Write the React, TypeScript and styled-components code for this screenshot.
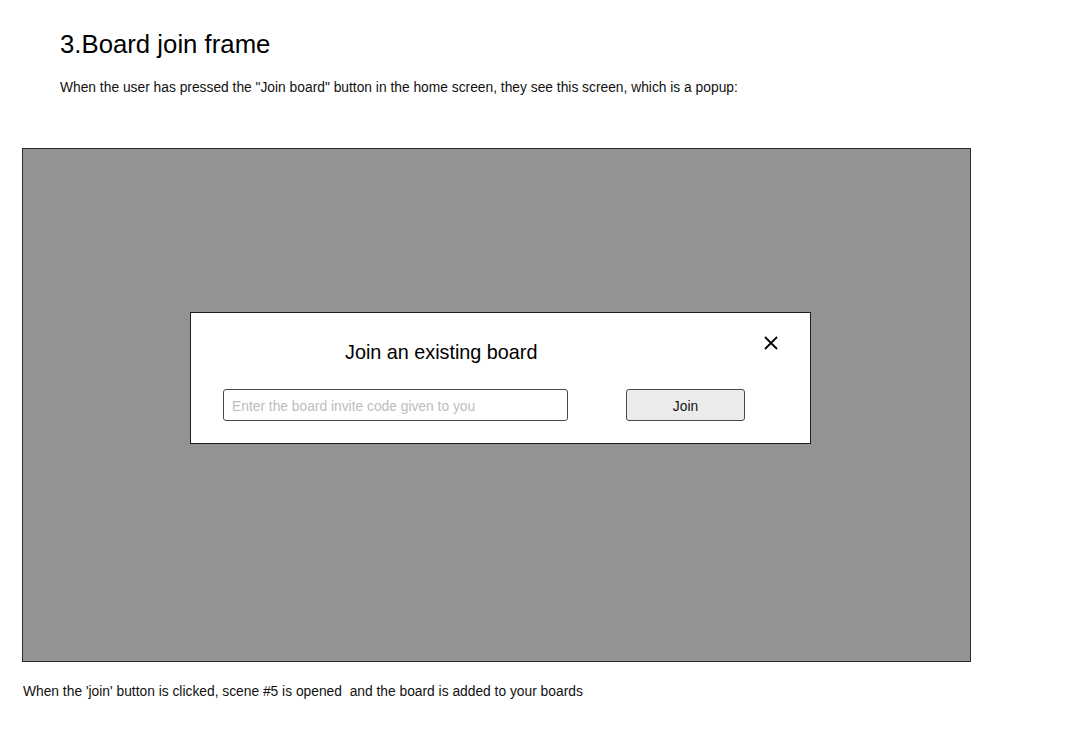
import React from "react";
import styled, { createGlobalStyle } from "styled-components";

const Global = createGlobalStyle`
  html, body { margin: 0; padding: 0; background: #ffffff; }
  body { font-family: "Liberation Sans", Arial, sans-serif; color: #000; }
`;

const Page = styled.div`
  padding-top: 29px;
  width: 1084px;
`;

const Title = styled.h1`
  margin: 0 0 0 60px;
  font-size: 25.75px;
  line-height: 30px;
  font-weight: 400;
`;

const Text = styled.p<{ $indent: number }>`
  margin: 0 0 0 ${(p) => p.$indent}px;
  font-size: 13.8px;
  line-height: 15px;
  color: #111;
`;

const Intro = styled(Text)`
  margin-top: 21px;
`;

const Footer = styled(Text)`
  margin-top: 22px;
`;

const Frame = styled.div`
  margin: 53px 0 0 22px;
  border: 1px solid #2b2b2b;
  background: #939393;
  padding: 163px 0 0 167px;
  box-sizing: content-box;
  display: flex;
  align-items: flex-start;
  width: 780px;
  height: 349px;
`;

const Modal = styled.div`
  width: 619px;
  height: 130px;
  background: #fff;
  border: 1px solid #1e1e1e;
  display: flex;
  flex-direction: column;
`;

const Header = styled.div`
  display: flex;
  align-items: flex-start;
  padding: 28px 31px 0 154px;
`;

const ModalTitle = styled.div`
  font-size: 19.8px;
  line-height: 23px;
  flex: 1;
`;

const Close = styled.button`
  width: 16px;
  height: 16px;
  margin-top: -6px;
  padding: 0;
  border: none;
  background: none;
  display: flex;
  align-items: center;
  justify-content: center;
  cursor: pointer;
`;

const Row = styled.div`
  display: flex;
  align-items: center;
  padding: 25px 0 0 32px;
  gap: 58px;
`;

const Input = styled.input`
  width: 345px;
  height: 32px;
  box-sizing: border-box;
  border: 1px solid #4a4a4a;
  border-radius: 3px;
  padding: 2px 8px 0;
  font-family: "Liberation Sans", Arial, sans-serif;
  font-size: 13.8px;
  outline: none;
  &::placeholder { color: #bdbdbd; }
`;

const JoinButton = styled.button`
  width: 119px;
  height: 32px;
  box-sizing: border-box;
  border: 1px solid #4a4a4a;
  border-radius: 3px;
  background: #ebebeb;
  padding: 2px 0 0;
  font-family: "Liberation Sans", Arial, sans-serif;
  font-size: 13.8px;
  color: #111;
  cursor: pointer;
`;

export default function App() {
  return (
    <Page>
      <Global />
      <Title>3.Board join frame</Title>
      <Intro $indent={60}>
        When the user has pressed the "Join board" button in the home screen, they see this screen, which is a popup:
      </Intro>
      <Frame>
        <Modal>
          <Header>
            <ModalTitle>Join an existing board</ModalTitle>
            <Close aria-label="Close">
              <svg width="14" height="14" viewBox="0 0 14 14">
                <path d="M1 1 L13 13 M13 1 L1 13" stroke="#000" strokeWidth="1.8" fill="none" />
              </svg>
            </Close>
          </Header>
          <Row>
            <Input placeholder="Enter the board invite code given to you" />
            <JoinButton>Join</JoinButton>
          </Row>
        </Modal>
      </Frame>
      <Footer $indent={23}>
        When the 'join' button is clicked, scene #5 is opened&nbsp; and the board is added to your boards
      </Footer>
    </Page>
  );
}
